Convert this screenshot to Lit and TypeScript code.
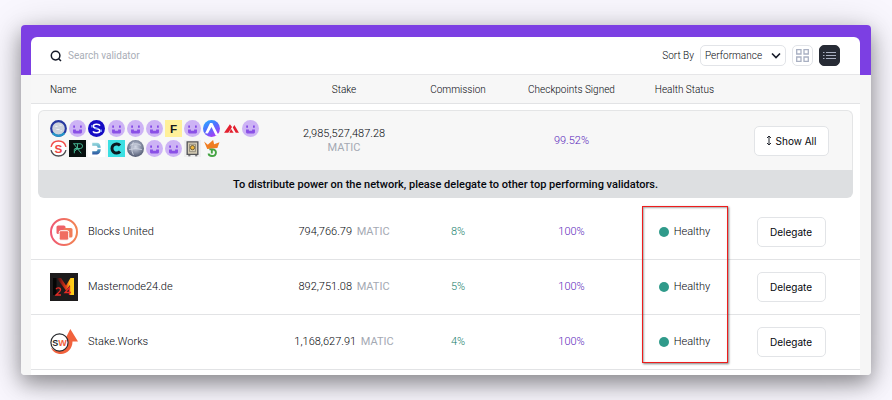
import { LitElement, html, css, svg } from "lit";
import { customElement, state } from "lit/decorators.js";
import { classMap } from "lit/directives/class-map.js";

const face = svg`<circle cx="8" cy="8" r="8" fill="#cdb3f5"/><path d="M4 5.200h1.600v2H4zM10.400 5.200h1.600v2h-1.600z" fill="#8247e5"/><path d="M3.800 9h8.400v2.600a1 1 0 0 1-1 1H4.800a1 1 0 0 1-1-1zM6.500 9v1.200h3V9z" fill="#8a50e6" fill-rule="evenodd"/>`;
const ring = svg`<circle cx="8" cy="8" r="6.900" fill="#cdd2dc" stroke="#2739a0" stroke-width="2"/><path d="M2.500 12.200a6.900 6.900 0 0 0 11 0" fill="none" stroke="#2596c8" stroke-width="2"/><path d="M5 6h2M9 5h2M6 9h3M10 10h1" stroke="#eceef2"/>`;
const knot = svg`<circle cx="8" cy="8" r="8" fill="#160cc4"/><path d="M11.300 5.200C10.500 3.600 5 3.400 5 5.800s6.200 1.800 6.200 4.300-5.500 2.300-6.500.500" fill="none" stroke="#fff" stroke-width="1.500"/><path d="M3.600 7V4.600M12.400 9v2.400M6.500 8h3" stroke="#8fb4ff" stroke-width="1.200"/>`;
const letterF = svg`<path d="M0 0h16v16H0z" fill="#fff09a"/><text x="8" y="12" text-anchor="middle" class="glyph dark">F</text>`;
const peak = svg`<defs><linearGradient id="pk" x1="0" y1="0" x2=".6" y2="1"><stop offset="0" stop-color="#25b5ff"/><stop offset=".5" stop-color="#4d72ff"/><stop offset="1" stop-color="#a63df5"/></linearGradient></defs><circle cx="8" cy="8" r="8" fill="url(#pk)"/><path d="M2 12.500 6.600 2.800h2.200L14.500 14l-2.700.300L8 6.500l-3.400 6.300z" fill="#fff"/>`;
const ridge = svg`<path d="M1 12 6.500 4l2 2.600L5 12zM9.200 7l1.500-2.200L15 12h-3zM7.500 8.300 10 12H6z" fill="#e3202f"/>`;
const swirl = svg`<circle cx="8" cy="8" r="7.300" fill="#fff"/><path d="M1 6.500a7.200 7.200 0 0 1 14 0" fill="none" stroke="#f04a46" stroke-width="1.300"/><path d="M1 9.500a7.200 7.200 0 0 0 14 0" fill="none" stroke="#4b4b4f" stroke-width="1.300"/><text x="8" y="12" text-anchor="middle" class="glyph red">S</text>`;
const mono = svg`<path d="M0 0h16v16H0z" fill="#07100f"/><path d="M5 12.500v-4h5M4 3.500h6.500a2 2 0 0 1 0 4.500L5.500 8M8 8.200l3.500 4.300M8 3.500v4.200L5 11M4.500 3.500l3 4" fill="none" stroke="#45b893" stroke-width=".900"/>`;
const halves = svg`<defs><linearGradient id="hv" gradientUnits="userSpaceOnUse" x1="0" y1="2" x2="0" y2="14"><stop offset="0" stop-color="#a7e0e2"/><stop offset=".5" stop-color="#4fa5c2"/><stop offset="1" stop-color="#2c4f9e"/></linearGradient></defs><path d="M0 0h16v16H0z" fill="#fff"/><path d="M4 2.500h4.500c2 0 3.300 1.800 3.500 4.700H9C9 5.900 8 5.400 7.200 5.400H4zM4 13.700h4.500c2 0 3.300-1.800 3.500-4.900H9c0 1.400-1 1.900-1.800 1.900H4z" fill="url(#hv)"/>`;
const cRing = svg`<path d="M0 0h16v16H0z" fill="#3be0e3"/><path d="M11.300 5.200a4.300 4.300 0 1 0 0 5.600" fill="none" stroke="#0b1b22" stroke-width="2.800"/>`;
const globe = svg`<defs><radialGradient id="gl" cx=".5" cy=".4" r=".6"><stop offset="0" stop-color="#d4d9e6"/><stop offset=".55" stop-color="#8b93a8"/><stop offset="1" stop-color="#505870"/></radialGradient></defs><circle cx="8" cy="8" r="8" fill="url(#gl)"/><path d="M3 5q5-3 10 0M2 9q6-2 12 0M6 2Q3 8 6 14" fill="none" stroke="#d3d8e4" stroke-width=".8"/>`;
const vault = svg`<path d="M0 0h16v16H0z" fill="#eeeeef"/><path d="M3 1.800h10v11.700H3z" fill="#d6cdb6" stroke="#55565a" stroke-width="1.300"/><path d="M5.200 4h5.600v7H5.200z" fill="none" stroke="#8a8577" stroke-width=".8"/><circle cx="8" cy="7.200" r="2" fill="#efb73b" stroke="#5b4d2b" stroke-width=".8"/><path d="M4 14.800h2M10.500 14.800h2" stroke="#55565a"/>`;
const crown = svg`<path d="M1 1.500 4.500 4.500 9.500 0l1 4L15.500 2l-2 5.500L4 8.500z" fill="#f07d21"/><path d="M6 8.800h2.800c4.700 0 4.400 6.300-.3 6.300-2.200 0-3.200-.800-3.200-2.300M8.300 9.500v3.300" fill="none" stroke="#45a443" stroke-width="1.800"/>`;

const delegates = [ring, face, knot, face, face, face, letterF, face, peak, ridge, face, swirl, mono, halves, cRing, globe, face, face, vault, crown];

const blocksUnited = svg`<defs><linearGradient id="bu" x1="0" y1="0" x2="1" y2="0"><stop offset="0" stop-color="#ef5873"/><stop offset="1" stop-color="#f28552"/></linearGradient></defs><circle cx="14" cy="14" r="13" fill="#fff" stroke="url(#bu)" stroke-width="2"/><rect x="6.500" y="7.500" width="9" height="8.500" rx="1.600" fill="#ee6268"/><rect x="13.500" y="10" width="9" height="9.500" rx="1.600" fill="#f17c58"/><rect x="9.200" y="12.700" width="9.500" height="9.500" rx="1.600" fill="#f06d61" stroke="#fff"/>`;
const masternode = svg`<defs><linearGradient id="mn" x1="0" y1="0" x2="1" y2="0"><stop offset="0" stop-color="#2a100e"/><stop offset=".25" stop-color="#8e1914"/><stop offset=".55" stop-color="#e8401a"/><stop offset=".75" stop-color="#ffc21a"/><stop offset="1" stop-color="#ffd21a"/></linearGradient></defs><path d="M0 0h28v28H0z" fill="#1d1b1c"/><path d="M3 5h3.500v17H3z" fill="#050505"/><path d="M7 5h4l5 7.500L20.500 5H24v17h-4V12l-4 5.500L8.500 7.500z" fill="url(#mn)"/><path d="M6 16.200c.800-2 4.800-1.800 4.500.800-.200 2-3 3-4.500 5H11M19.500 22v-7.500l-4.500 5h6" fill="none" stroke="#e62b25" stroke-width="1.300"/>`;
const stakeWorks = svg`<path d="M20.300 1 28 13.500h-5.500C22.500 21 17 26 11 26c-5 0-8.500-2.500-10-6.500 5 5.500 16 5.500 17.500-6H14z" fill="#f1623d"/><circle cx="9.500" cy="14.500" r="8.600" fill="#fff" stroke="#26282c" stroke-width="1.200"/><text x="9.500" y="17.800" text-anchor="middle" class="glyph sw"><tspan>S</tspan><tspan fill="#f1623d">W</tspan></text>`;

const validators = [
  { name: "Blocks United", logo: blocksUnited, stake: "794,766.79", fee: "8%", signed: "100%" },
  { name: "Masternode24.de", logo: masternode, stake: "892,751.08", fee: "5%", signed: "100%" },
  { name: "Stake.Works", logo: stakeWorks, stake: "1,168,627.91", fee: "4%", signed: "100%" },
];

@customElement("app-root")
export class AppRoot extends LitElement {
  @state() private view: "grid" | "list" = "list";

  static styles = css`
    :host {
      display: block;
      box-sizing: border-box;
      min-height: 100vh;
      padding: 25px 21px;
      overflow: hidden;
      background: #f9f7fe;
      color: #05070d;
      font: 300 11px/14px Roboto, "Liberation Sans", sans-serif;
    }
    * { box-sizing: border-box; }
    button, input, select { font: inherit; color: inherit; margin: 0; }
    svg { display: block; flex: none; }
    .window {
      padding: 12px 11px 0 10px;
      border-radius: 4px;
      background: linear-gradient(#7c3fe3 50px, #f6f6f6 50px);
      box-shadow: 0 8px 20px rgba(0, 0, 0, 0.35), 0 6px 40px rgba(0, 0, 0, 0.2);
    }
    .panel {
      padding-bottom: 5px;
      border-radius: 6px 6px 0 0;
      background: #fff;
    }
    .toolbar {
      display: flex;
      align-items: center;
      gap: 6px;
      height: 38px;
      padding: 0 20px 0 19px;
      border-bottom: 1px solid #e6e6e8;
    }
    .search {
      flex: 1;
      display: flex;
      align-items: center;
      gap: 6px;
    }
    .search input {
      flex: 1;
      min-width: 0;
      padding: 0;
      border: 0;
      outline: 0;
      background: none;
      font-size: 10px;
      font-weight: 400;
    }
    .search input::placeholder { color: #a9aeb7; opacity: 1; }
    .sort { font-size: 10px; }
    .pick { position: relative; display: flex; }
    .pick select {
      appearance: none;
      width: 86px;
      height: 21px;
      padding: 0 4px;
      border: 1px solid #e2e4e8;
      border-radius: 5px;
      background: #fff;
      font-size: 10px;
    }
    .pick svg { position: absolute; right: 5px; top: 7px; pointer-events: none; }
    .view {
      display: grid;
      place-items: center;
      width: 21px;
      height: 21px;
      padding: 0;
      border: 1px solid #e2e4e8;
      border-radius: 5px;
      background: #fff;
      color: #a9b0c2;
    }
    .view.active { border-color: #272b35; background: #272b35; }
    table, thead, tbody { display: block; }
    tr {
      display: grid;
      grid-template-columns: 237fr 114fr 114fr 113fr 113fr 100fr;
      align-items: center;
      height: 55px;
      padding: 0 19px;
      border-bottom: 1px solid #e2e3e5;
    }
    th, td { padding: 0; text-align: center; font-weight: inherit; }
    .head {
      height: 29px;
      padding-top: 1px;
      background: #f7f7f7;
      font-size: 10px;
    }
    .name { display: flex; align-items: center; gap: 10px; text-align: left; }
    .summary {
      height: 60px;
      margin: 6px 7px 0;
      padding: 0 11px;
      border: 1px solid #e4e5e6;
      border-bottom: 0;
      border-radius: 6px 6px 0 0;
      background: #f7f7f7;
    }
    .faces {
      display: grid;
      grid-template-columns: repeat(11, 1fr);
      row-gap: 3px;
      width: 211px;
      padding-bottom: 4px;
    }
    .notice {
      display: block;
      height: 28px;
      margin: 0 7px 7px;
      padding: 0;
      border: 0;
      border-radius: 0 0 6px 6px;
      background: #dddfe1;
      font-weight: 500;
    }
    .notice td { display: block; line-height: 30px; }
    .unit { color: #a4a9b3; font-weight: 400; }
    .inline { margin-left: 2px; }
    .line { display: block; }
    .fee { color: #17806c; }
    .signed { color: #5a26bb; }
    .health {
      position: relative;
      align-self: stretch;
      display: flex;
      align-items: center;
      justify-content: center;
      gap: 5px;
    }
    .dot { width: 10px; height: 10px; border-radius: 50%; background: #2f9a8a; }
    .mark {
      position: absolute;
      left: 14px;
      right: 13px;
      top: 1px;
      height: 157px;
      border: 1px solid #ee1c1c;
      box-shadow: 1px 1px 2px rgba(0, 0, 0, 0.5), inset 1px 1px 2px rgba(0, 0, 0, 0.35);
      pointer-events: none;
    }
    .action {
      width: 69px;
      height: 30px;
      padding: 0;
      border: 1px solid #e2e4e7;
      border-radius: 5px;
      background: #fff;
      font: 400 10px/14px Inter, "Liberation Sans", sans-serif;
      vertical-align: middle;
    }
    .wide {
      display: inline-flex;
      align-items: center;
      justify-content: center;
      gap: 4px;
      width: 75px;
    }
    .glyph { font: 700 11px "Liberation Sans", sans-serif; }
    .dark { fill: #16181d; }
    .red { fill: #ef4743; }
    .sw { font-size: 9px; fill: #26282c; }
  `;

  render() {
    return html`
      <main class="window">
        <section class="panel">
          <div class="toolbar">
            <label class="search">
              <svg width="12" height="12" viewBox="0 0 12 12" fill="none" stroke="#151a28" stroke-width="1.500" role="img" aria-label="Search"><circle cx="5.600" cy="5.600" r="4.300"/><path d="m8.700 8.700 2.300 2.300"/></svg>
              <input type="text" placeholder="Search validator" />
            </label>
            <label class="sort" for="sort">Sort By</label>
            <div class="pick">
              <select id="sort"><option>Performance</option></select>
              <svg width="10" height="8" viewBox="0 0 10 8" fill="none" stroke="#151a28" stroke-width="1.600"><path d="m1 1.500 4 4 4-4"/></svg>
            </div>
            <button class=${classMap({ view: true, active: this.view === "grid" })} aria-label="Grid view" @click=${() => (this.view = "grid")}>
              <svg width="13" height="13" viewBox="0 0 13 13" fill="none" stroke="currentColor" stroke-width="1.300"><path d="M.700.700h4.300v4.300H.700zM8 .700h4.300v4.300H8zM.700 8h4.300v4.300H.700zM8 8h4.300v4.300H8z"/></svg>
            </button>
            <button class=${classMap({ view: true, active: this.view === "list" })} aria-label="List view" @click=${() => (this.view = "list")}>
              <svg width="13" height="9" viewBox="0 0 13 9" stroke="currentColor"><path d="M0 1.500h1.500M3 1.500h10M0 4.500h1.500M3 4.500h10M0 7.500h1.500M3 7.500h10"/></svg>
            </button>
          </div>
          <table>
            <thead>
              <tr class="head">
                <th class="name">Name</th><th>Stake</th><th>Commission</th><th>Checkpoints Signed</th><th>Health Status</th><th></th>
              </tr>
            </thead>
            <tbody>
              <tr class="summary">
                <td class="name">
                  <div class="faces">${delegates.map((d) => html`<svg width="17" height="17" viewBox="0 0 16 16">${d}</svg>`)}</div>
                </td>
                <td>2,985,527,487.28<span class="unit line">MATIC</span></td>
                <td></td>
                <td class="signed">99.52%</td>
                <td></td>
                <td>
                  <button class="action wide"><svg width="6" height="11" viewBox="0 0 6 11" fill="none" stroke="#22262f"><path d="M3 1v9M1 3l2-2 2 2M1 8l2 2 2-2"/></svg>Show All</button>
                </td>
              </tr>
              <tr class="notice">
                <td>To distribute power on the network, please delegate to other top performing validators.</td>
              </tr>
              ${validators.map(
                (v, i) => html`<tr>
                  <td class="name"><svg width="28" height="28" viewBox="0 0 28 28">${v.logo}</svg>${v.name}</td>
                  <td>${v.stake} <span class="unit inline">MATIC</span></td>
                  <td class="fee">${v.fee}</td>
                  <td class="signed">${v.signed}</td>
                  <td class="health"><span class="dot"></span>Healthy${i === 0 ? html`<span class="mark"></span>` : ""}</td>
                  <td><button class="action">Delegate</button></td>
                </tr>`
              )}
            </tbody>
          </table>
        </section>
      </main>
    `;
  }
}
